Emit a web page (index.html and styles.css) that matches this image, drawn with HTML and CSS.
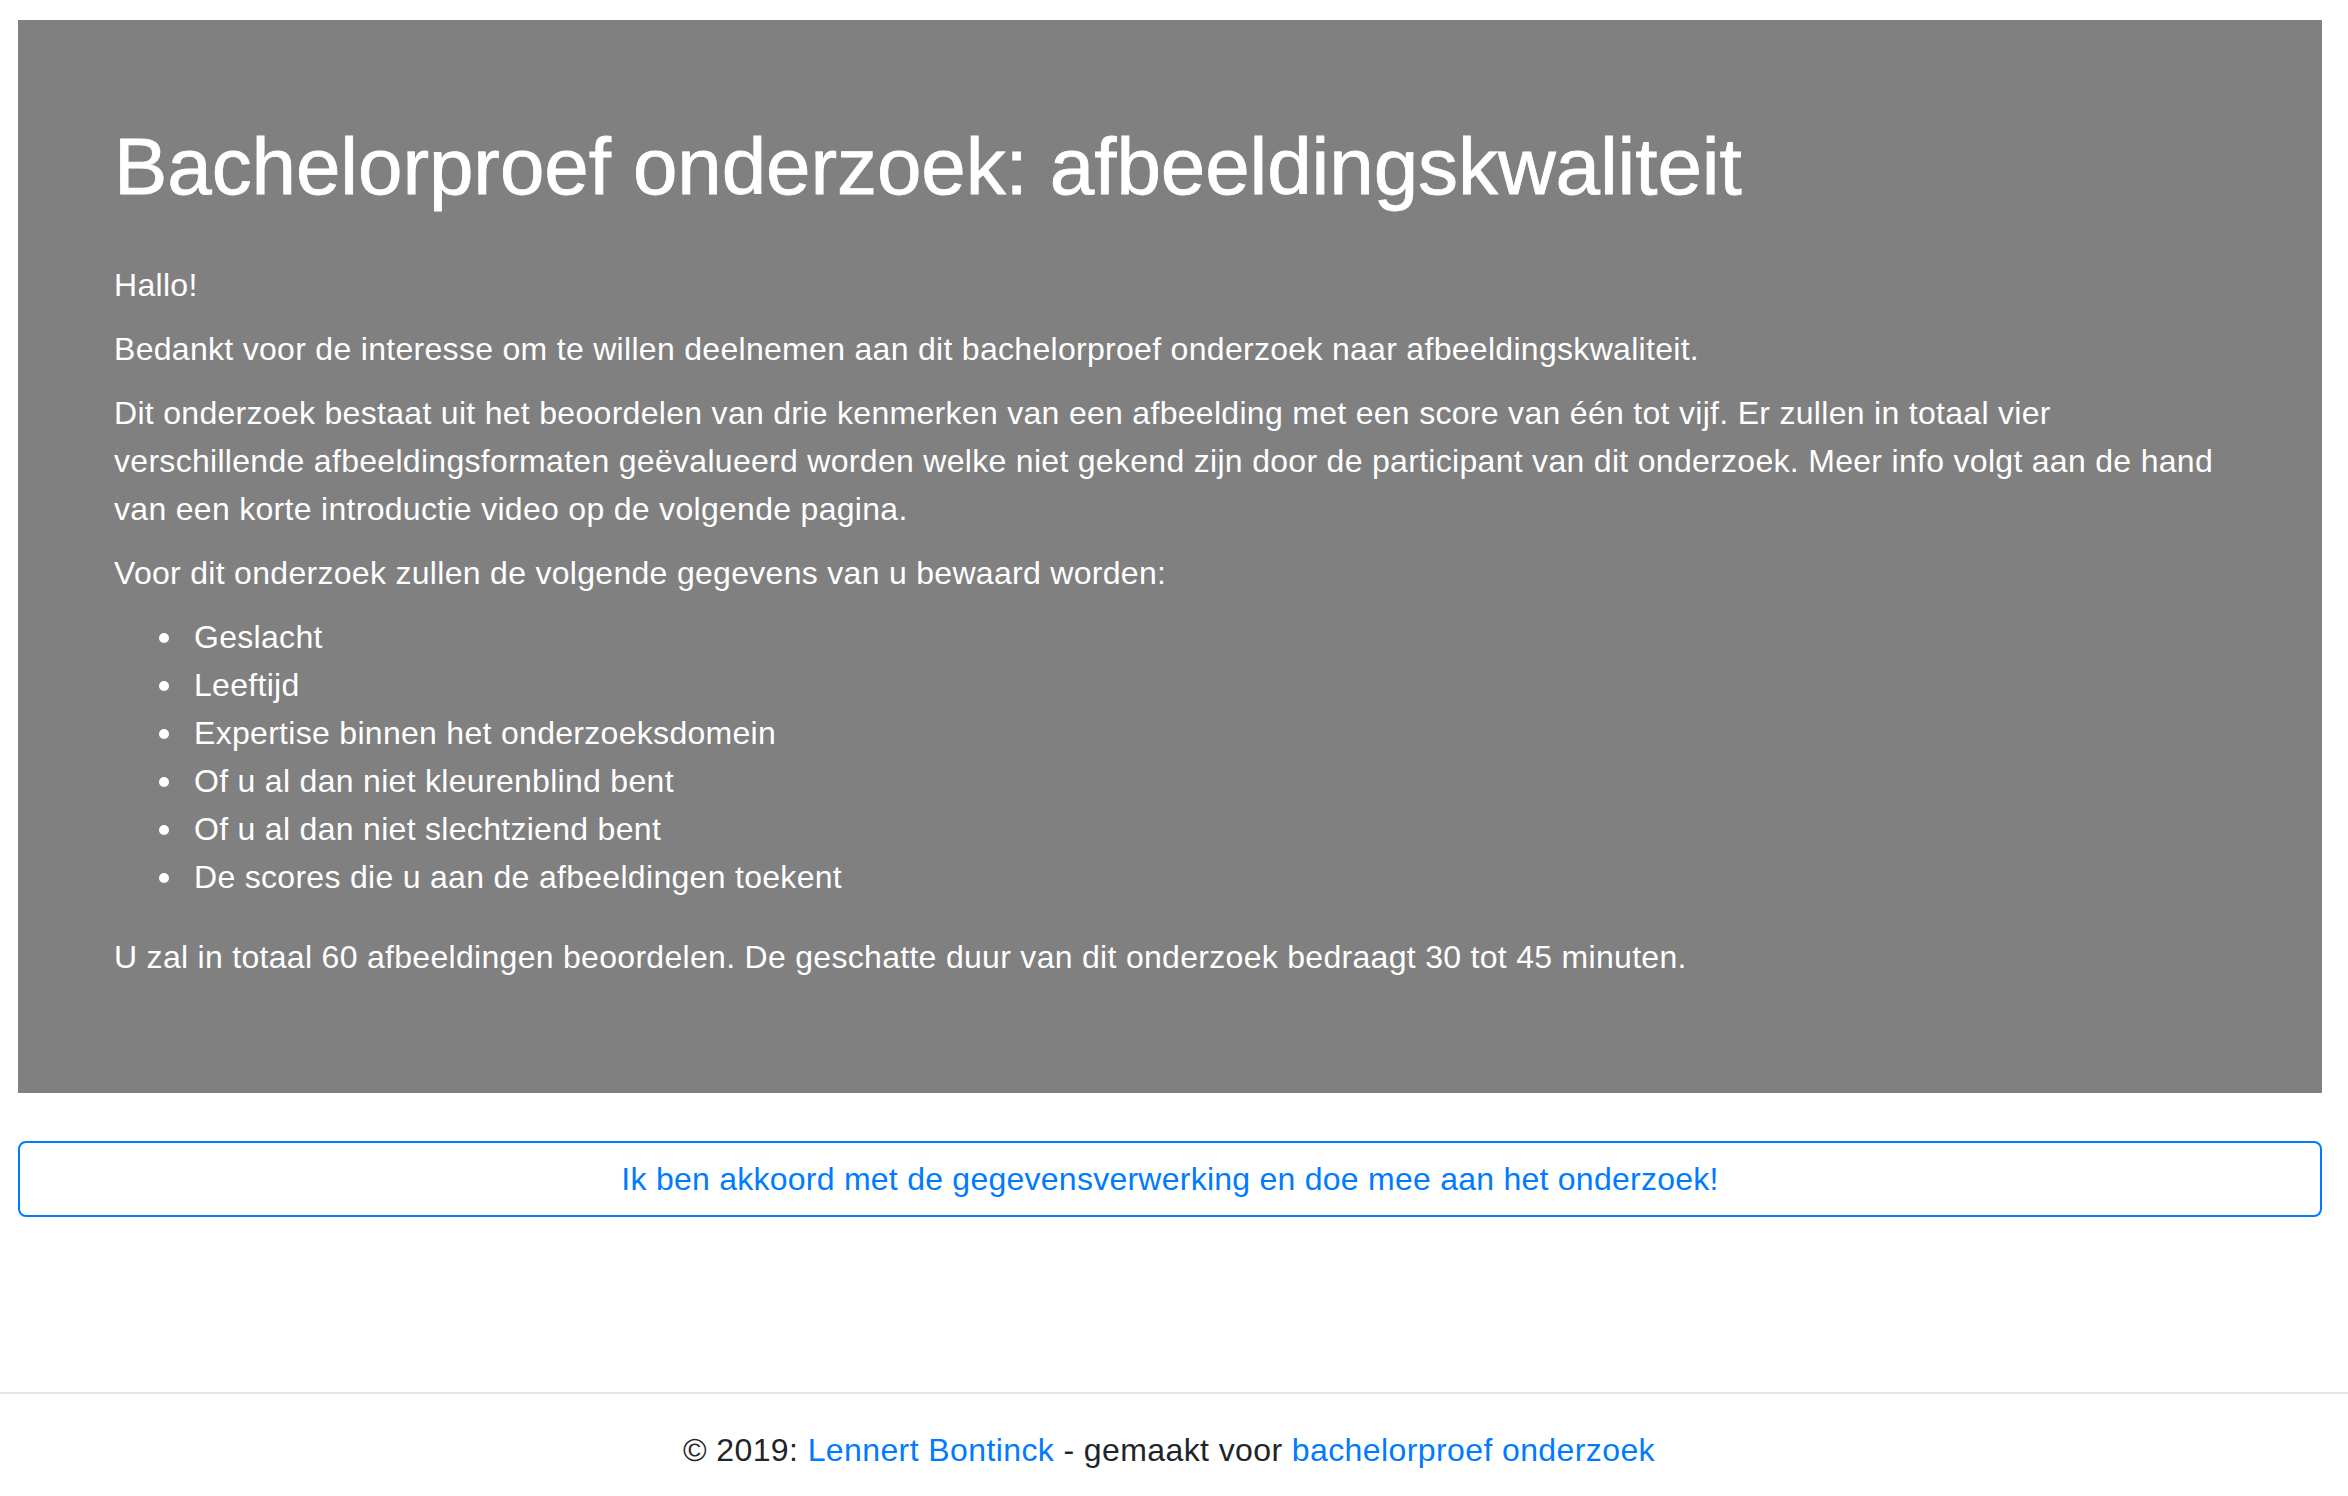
FILE: index.html
```html
<!DOCTYPE html>
<html lang="nl">
<head>
<meta charset="utf-8">
<title>Bachelorproef onderzoek: afbeeldingskwaliteit</title>
<link rel="stylesheet" href="styles.css">
</head>
<body>
<main class="page">
  <section class="intro">
    <h1 class="intro-title">Bachelorproef onderzoek: afbeeldingskwaliteit</h1>
    <p>Hallo!</p>
    <p>Bedankt voor de interesse om te willen deelnemen aan dit bachelorproef onderzoek naar afbeeldingskwaliteit.</p>
    <p>Dit onderzoek bestaat uit het beoordelen van drie kenmerken van een afbeelding met een score van één tot vijf. Er zullen in totaal vier verschillende afbeeldingsformaten geëvalueerd worden welke niet gekend zijn door de participant van dit onderzoek. Meer info volgt aan de hand van een korte introductie video op de volgende pagina.</p>
    <p>Voor dit onderzoek zullen de volgende gegevens van u bewaard worden:</p>
    <ul class="data-list">
      <li>Geslacht</li>
      <li>Leeftijd</li>
      <li>Expertise binnen het onderzoeksdomein</li>
      <li>Of u al dan niet kleurenblind bent</li>
      <li>Of u al dan niet slechtziend bent</li>
      <li>De scores die u aan de afbeeldingen toekent</li>
    </ul>
    <p>U zal in totaal 60 afbeeldingen beoordelen. De geschatte duur van dit onderzoek bedraagt 30 tot 45 minuten.</p>
  </section>
  <a class="agree-btn" href="#">Ik ben akkoord met de gegevensverwerking en doe mee aan het onderzoek!</a>
</main>
<footer class="footer">
  <span>© 2019: <a class="link" href="#">Lennert Bontinck</a> - gemaakt voor <a class="link" href="#">bachelorproef onderzoek</a></span>
</footer>
</body>
</html>
```

FILE: styles.css
```css
html, body {
  margin: 0;
  padding: 0;
}

body {
  height: 1496px;
  overflow: hidden;
  display: flex;
  flex-direction: column;
  font-family: "Liberation Sans", Arial, Helvetica, sans-serif;
  font-size: 32px;
  line-height: 48px;
  letter-spacing: 0.3px;
  color: #212529;
  background: #ffffff;
}

.page {
  padding: 20px 26px 0 18px;
  display: flex;
  flex-direction: column;
}

.intro {
  background: #808080;
  color: #ffffff;
  padding: 99px 96px 96px 96px;
  margin-bottom: 48px;
}

.intro-title {
  margin: 0 0 46px 0;
  font-size: 80px;
  line-height: 96px;
  font-weight: 500;
  letter-spacing: -0.1px;
  -webkit-text-stroke: 0.8px #ffffff;
}

.intro p {
  margin: 0 0 16px 0;
}

.data-list {
  margin: 0 0 32px 0;
  padding-left: 80px;
  list-style: none;
}

.data-list li {
  display: flex;
  align-items: center;
}

.data-list li::before {
  content: "";
  flex: none;
  width: 10px;
  height: 10px;
  border-radius: 50%;
  background: #ffffff;
  margin-left: -35px;
  margin-right: 25px;
  position: relative;
  top: 1px;
}

.agree-btn {
  display: block;
  text-align: center;
  color: #007bff;
  text-decoration: none;
  border: 2px solid #007bff;
  border-radius: 8px;
  padding: 12px 24px;
  line-height: 48px;
  letter-spacing: 0.25px;
}

.footer {
  margin-top: auto;
  border-top: 2px solid #e5e5e5;
  padding: 32px 10px 22px 0;
  text-align: center;
  letter-spacing: 0.4px;
}

.link {
  color: #007bff;
  text-decoration: none;
}
```
